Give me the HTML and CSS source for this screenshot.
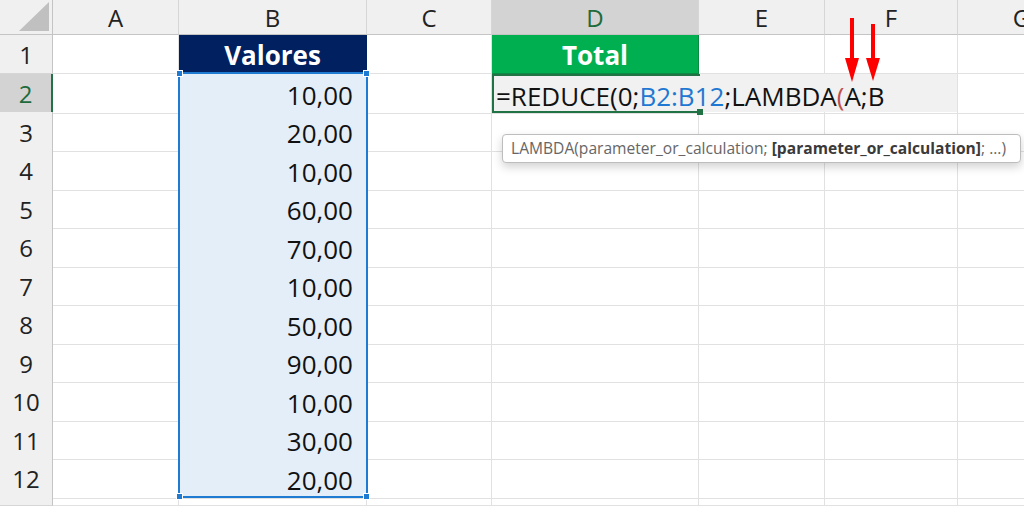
FILE: index.html
```html
<!DOCTYPE html>
<html lang="pt-br">
<head>
    <meta charset="UTF-8">
    <title>REDUCE com LAMBDA</title>
    <link rel="stylesheet" href="styles.css">
</head>
<body>
    <div class="sheet">
        <div class="row head">
            <div class="corner"><span class="tri"></span></div>
            <div class="col">A</div>
            <div class="col">B</div>
            <div class="col">C</div>
            <div class="col active">D</div>
            <div class="col">E</div>
            <div class="col">F</div>
            <div class="col">G</div>
        </div>
        <div class="row">
            <div class="num">1</div>
            <div class="cell"></div>
            <div class="cell title navy">Valores</div>
            <div class="cell"></div>
            <div class="cell title green">Total</div>
            <div class="cell"></div>
            <div class="cell"></div>
            <div class="cell"></div>
        </div>
        <div class="row">
            <div class="num active">2</div>
            <div class="cell"></div>
            <div class="cell value">10,00</div>
            <div class="cell"></div>
            <div class="cell editing">
                <div class="edit">=REDUCE(0;<span class="ref">B2:B12</span>;LAMBDA<span class="paren">(</span>A;B</div>
                <div class="frame"><span class="handle"></span></div>
            </div>
            <div class="cell"></div>
            <div class="cell"></div>
            <div class="cell"></div>
        </div>
        <div class="row">
            <div class="num">3</div>
            <div class="cell"></div>
            <div class="cell value">20,00</div>
            <div class="cell"></div><div class="cell"></div><div class="cell"></div><div class="cell"></div><div class="cell"></div>
        </div>
        <div class="row">
            <div class="num">4</div>
            <div class="cell"></div>
            <div class="cell value">10,00</div>
            <div class="cell"></div><div class="cell"></div><div class="cell"></div><div class="cell"></div><div class="cell"></div>
        </div>
        <div class="row">
            <div class="num">5</div>
            <div class="cell"></div>
            <div class="cell value">60,00</div>
            <div class="cell"></div><div class="cell"></div><div class="cell"></div><div class="cell"></div><div class="cell"></div>
        </div>
        <div class="row">
            <div class="num">6</div>
            <div class="cell"></div>
            <div class="cell value">70,00</div>
            <div class="cell"></div><div class="cell"></div><div class="cell"></div><div class="cell"></div><div class="cell"></div>
        </div>
        <div class="row">
            <div class="num">7</div>
            <div class="cell"></div>
            <div class="cell value">10,00</div>
            <div class="cell"></div><div class="cell"></div><div class="cell"></div><div class="cell"></div><div class="cell"></div>
        </div>
        <div class="row">
            <div class="num">8</div>
            <div class="cell"></div>
            <div class="cell value">50,00</div>
            <div class="cell"></div><div class="cell"></div><div class="cell"></div><div class="cell"></div><div class="cell"></div>
        </div>
        <div class="row">
            <div class="num">9</div>
            <div class="cell"></div>
            <div class="cell value">90,00</div>
            <div class="cell"></div><div class="cell"></div><div class="cell"></div><div class="cell"></div><div class="cell"></div>
        </div>
        <div class="row">
            <div class="num">10</div>
            <div class="cell"></div>
            <div class="cell value">10,00</div>
            <div class="cell"></div><div class="cell"></div><div class="cell"></div><div class="cell"></div><div class="cell"></div>
        </div>
        <div class="row">
            <div class="num">11</div>
            <div class="cell"></div>
            <div class="cell value">30,00</div>
            <div class="cell"></div><div class="cell"></div><div class="cell"></div><div class="cell"></div><div class="cell"></div>
        </div>
        <div class="row">
            <div class="num">12</div>
            <div class="cell"></div>
            <div class="cell value last">20,00</div>
            <div class="cell"></div><div class="cell"></div><div class="cell"></div><div class="cell"></div><div class="cell"></div>
        </div>
        <div class="row tail">
            <div class="num"></div>
            <div class="cell"></div><div class="cell"></div><div class="cell"></div><div class="cell"></div><div class="cell"></div><div class="cell"></div><div class="cell"></div>
        </div>

        <!-- seleção B2:B12 -->
        <div class="selection">
            <span class="dot tl"></span>
            <span class="dot tr"></span>
            <span class="dot bl"></span>
            <span class="dot br"></span>
        </div>

        <div class="tooltip">LAMBDA(parameter_or_calculation; <b>[parameter_or_calculation]</b>; ...)</div>

        <svg class="arrows" width="50" height="72" viewBox="0 0 50 72">
            <rect x="10" y="4" width="4" height="42" fill="#ff0000"/>
            <polygon points="5,44 19,44 12,68" fill="#ff0000"/>
            <rect x="31" y="10" width="4" height="36" fill="#ff0000"/>
            <polygon points="26,44 40,44 33,67" fill="#ff0000"/>
        </svg>
    </div>
</body>
</html>
```

FILE: styles.css
```css
html, body {
    margin: 0;
    padding: 0;
    background: #ffffff;
}
body {
    font-family: 'Open Sans', 'Noto Sans', sans-serif;
    color: #111111;
}
.sheet {
    position: relative;
    width: 1024px;
    height: 506px;
    overflow: hidden;
}
.row {
    display: grid;
    grid-template-columns: 53px 126px 188px 125px 207px 126px 133px 128px;
    height: 38.5px;
}
.row.head {
    height: 35px;
}
.row.tail {
    height: 9px;
}
.cell, .num, .col, .corner {
    box-sizing: border-box;
    border-right: 1px solid #e1e1e1;
    border-bottom: 1px solid #e1e1e1;
}
.col, .corner {
    background: #f0f0f0;
    border-right-color: #d6d6d6;
    border-bottom-color: #c4c4c4;
    display: flex;
    justify-content: center;
    align-items: center;
    font-size: 24px;
    color: #222222;
    padding-top: 1px;
}
.col.active {
    background: #d3d3d3;
    color: #1e6b3c;
}
.corner {
    position: relative;
    border-right-color: #c4c4c4;
}
.tri {
    position: absolute;
    right: 3px;
    bottom: 3px;
    width: 0;
    height: 0;
    border-left: 30px solid transparent;
    border-bottom: 29px solid #c0c0c0;
}
.num {
    background: #f0f0f0;
    border-right-color: #c4c4c4;
    border-bottom-color: #d6d6d6;
    display: flex;
    justify-content: center;
    align-items: center;
    font-size: 24px;
    color: #222222;
    padding-top: 1px;
}
.num.active {
    background: #d3d3d3;
    color: #1e6b3c;
    border-right: 2px solid #217346;
}
.cell {
    display: flex;
    align-items: center;
    font-size: 26px;
}
.title {
    justify-content: center;
    font-weight: bold;
    color: #ffffff;
    padding-top: 2px;
}
.navy {
    background: #002060;
    border-color: #002060;
}
.green {
    background: #00b050;
    border-color: #0a8a43;
}
.value {
    justify-content: flex-end;
    padding-right: 13px;
    padding-top: 3px;
    background: #e4eef9;
    border-bottom: 1px solid #2b2b2b;
    box-shadow: inset 2px 0 0 #e4eef9, inset -2px 0 0 #e4eef9;
}
.value.last {
    border-bottom-color: #e1e1e1;
}
.editing {
    position: relative;
    overflow: visible;
}
.edit {
    position: absolute;
    left: 0;
    top: 0;
    width: 466px;
    height: 38px;
    box-sizing: border-box;
    padding: 3px 0 0 4px;
    background: #f1f1f1;
    border-right: 1px solid #e1e1e1;
    white-space: nowrap;
    line-height: 38px;
    z-index: 1;
}
.ref {
    color: #1f78d1;
}
.paren {
    color: #c0504d;
}
.frame {
    position: absolute;
    left: 0;
    top: 0;
    width: 208px;
    height: 39px;
    box-sizing: border-box;
    border: 2px solid #217346;
    border-right: none;
    z-index: 2;
}
.handle {
    position: absolute;
    right: -3px;
    bottom: -4px;
    width: 6px;
    height: 6px;
    background: #217346;
}
.selection {
    position: absolute;
    left: 178px;
    top: 72px;
    width: 190px;
    height: 426px;
    box-sizing: border-box;
    border: 2px solid #1f7bd1;
    z-index: 2;
}
.dot {
    position: absolute;
    width: 7px;
    height: 7px;
    background: #1f7bd1;
    border: 1px solid #ffffff;
    box-sizing: border-box;
}
.dot.tl { left: -4px; top: -4px; }
.dot.tr { right: -4px; top: -4px; }
.dot.bl { left: -4px; bottom: -4px; }
.dot.br { right: -4px; bottom: -4px; }
.tooltip {
    position: absolute;
    left: 502px;
    top: 134px;
    width: 519px;
    height: 29px;
    box-sizing: border-box;
    padding-left: 8px;
    background: #ffffff;
    border: 1px solid #bdbdbd;
    border-radius: 4px;
    box-shadow: 0 4px 10px rgba(0, 0, 0, 0.18);
    font-size: 15.6px;
    line-height: 27px;
    color: #666666;
    white-space: nowrap;
    z-index: 3;
}
.tooltip b {
    color: #3a3a3a;
}
.arrows {
    position: absolute;
    left: 840px;
    top: 14px;
    z-index: 4;
}
```
